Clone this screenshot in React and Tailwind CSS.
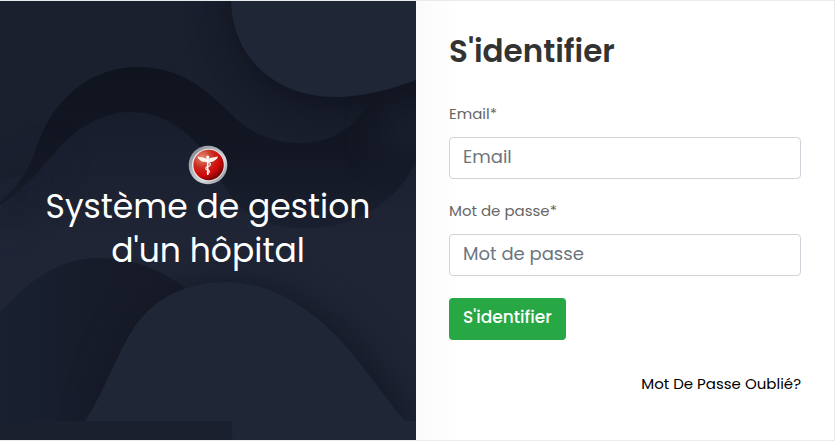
function Waves() {
  return (
    <svg
      className="col-start-1 row-start-1 h-full w-full"
      viewBox="0 0 416 439"
      preserveAspectRatio="none"
      aria-hidden="true"
    >
      <defs>
        <filter
          id="soft"
          filterUnits="userSpaceOnUse"
          x="-120"
          y="-120"
          width="680"
          height="680"
          colorInterpolationFilters="sRGB"
        >
          <feGaussianBlur stdDeviation="20" />
        </filter>
        <linearGradient id="band" x1="0" y1="66" x2="0" y2="240" gradientUnits="userSpaceOnUse">
          <stop offset="0" stopColor="#10141f" />
          <stop offset="0.5" stopColor="#131723" />
          <stop offset="1" stopColor="#1b2131" />
        </linearGradient>
        <linearGradient id="inner" x1="0" y1="110" x2="0" y2="240" gradientUnits="userSpaceOnUse">
          <stop offset="0" stopColor="#181d2c" />
          <stop offset="0.5" stopColor="#1b2131" />
          <stop offset="1" stopColor="#1f2535" />
        </linearGradient>
        <linearGradient id="low" x1="0" y1="0" x2="170" y2="0" gradientUnits="userSpaceOnUse">
          <stop offset="0" stopColor="#192130" />
          <stop offset="0.5" stopColor="#171c2a" />
          <stop offset="1" stopColor="#171a27" />
        </linearGradient>
        <clipPath id="upper">
          <path d="M0 0H416V76L372 95C360 122 335 142 300 142C270 142 248 130 230 112C206 88 180 66 138 66C90 66 52 98 36 148C28 170 18 186 0 201Z" />
        </clipPath>
        <clipPath id="frame">
          <rect width="416" height="420" />
        </clipPath>
      </defs>
      <rect width="416" height="439" fill="#1f2535" />
      <path d="M0 0H416V201H0Z" fill="#1a202e" />
      <path d="M0 181L36 169V201H0Z" fill="#1f2535" opacity="0.7" />
      <g clipPath="url(#upper)">
        <path d="M225 -20C225 70 265 112 340 112H440V-20Z" fill="#10131e" opacity="0.9" filter="url(#soft)" />
      </g>
      <path
        d="M0 201C18 186 28 170 36 148C52 98 90 66 138 66C180 66 206 88 230 112C248 130 270 142 300 142C335 142 360 122 372 95L416 70V270H0Z"
        fill="url(#band)"
      />
      <ellipse cx="412" cy="130" rx="30" ry="25" fill="#1f2535" opacity="0.8" filter="url(#soft)" />
      <path
        d="M0 204C25 190 42 165 58 148C80 124 105 111 130 111C160 111 183 126 200 146C220 170 223 190 242 207C262 224 285 228 312 227C362 226 402 194 416 160V439H0Z"
        fill="url(#inner)"
      />
      <g clipPath="url(#frame)">
        <path d="M0 204C25 190 42 165 58 148C52 170 30 195 0 225Z" fill="#121622" opacity="0.9" filter="url(#soft)" />
        <path d="M0 312C28 279 60 257 98 257C145 257 174 277 196 296V420H0Z" fill="url(#low)" />
        <path
          d="M95 440C110 390 120 355 140 325C165 290 195 283 232 283C280 283 325 310 355 345C385 375 405 410 425 440Z"
          fill="#131723"
          opacity="0.95"
          filter="url(#soft)"
        />
        <path
          d="M85 420C105 390 115 355 135 325C160 290 195 281 230 281C280 283 320 315 350 350C375 380 395 410 406 420Z"
          fill="#1f2635"
        />
      </g>
      <path d="M231 0C233 60 278 96 335 96C365 96 395 87 416 79V0Z" fill="#1f2635" />
      <rect y="420" width="232" height="19" fill="#1a202e" />
      <path d="M232 420H416V439H234Z" fill="#1f2635" />
    </svg>
  );
}

function Emblem() {
  return (
    <svg className="h-10 w-10" viewBox="0 0 40 40" role="img" aria-label="Caducée">
      <defs>
        <linearGradient id="ring" x1="0" y1="0" x2="1" y2="1">
          <stop offset="0" stopColor="#74787f" />
          <stop offset="0.4" stopColor="#b4b9bf" />
          <stop offset="0.65" stopColor="#d5d9dd" />
          <stop offset="1" stopColor="#777c84" />
        </linearGradient>
        <radialGradient id="ball" cx="0.3" cy="0.25" r="0.85">
          <stop offset="0" stopColor="#e78a74" />
          <stop offset="0.4" stopColor="#c92d20" />
          <stop offset="0.7" stopColor="#cf0808" />
          <stop offset="1" stopColor="#5a0505" />
        </radialGradient>
      </defs>
      <circle cx="20" cy="20" r="19.3" fill="url(#ring)" />
      <circle cx="20.3" cy="20" r="16.3" fill="#e4e6e8" />
      <circle cx="20.6" cy="20" r="15.2" fill="url(#ball)" />
      <path
        d="M19.5 14C16 12 13 12.500 9.500 11.500C10 14 11.500 14.500 12.500 15.500C14 17.500 17 16.500 19.500 17.500C22 16.500 25 17.500 26.500 15.500C28 14.500 29.500 14 30 11.500C26 12.500 23 12 19.500 14Z"
        fill="#fff4ec"
      />
      <circle cx="19.700" cy="12" r="1.600" fill="#fff" />
      <path d="M19.700 13V30" stroke="#fff" strokeWidth="1.600" />
      <path
        d="M20 17.500C23.500 18 23 21 20 21.500C17 22 17 24.500 19.500 25C22.500 25.500 21.500 28 19.500 28.500"
        fill="none"
        stroke="#fff"
        strokeWidth="1.100"
      />
    </svg>
  );
}

function Field({ id, label, type, placeholder }) {
  return (
    <div className="mb-5">
      <label htmlFor={id} className="mb-[11px] block text-[15px] leading-6 text-[#666]">
        {label}
      </label>
      <input
        id={id}
        type={type}
        placeholder={placeholder}
        className="block h-[42px] w-full rounded border border-[#ced4da] bg-white px-[13px] pb-[3px] text-[18px] text-[#495057] placeholder:text-[#6c757d]"
      />
    </div>
  );
}

export default function App() {
  return (
    <main className="grid min-h-screen grid-cols-[calc(50%-1px)_1fr] border-y border-r border-[#e9eaec] bg-white font-['Poppins',Inter,sans-serif]">
      <section className="grid overflow-hidden bg-[#1f2535]">
        <Waves />
        <div className="z-10 col-start-1 row-start-1 flex flex-col items-center justify-center px-8 pb-6 text-center text-white">
          <Emblem />
          <h1 className="text-[33px] leading-[44px] font-normal">
            Système de gestion d'un hôpital
          </h1>
        </div>
      </section>
      <section className="bg-linear-to-r from-[#fafafa] to-white to-10% px-[33px] pt-[30px] pb-10">
        <h2 className="mb-[31px] text-[31px] leading-10 font-semibold text-[#333]">S'identifier</h2>
        <form onSubmit={(event) => event.preventDefault()}>
          <Field id="email" label="Email*" type="email" placeholder="Email" />
          <Field id="password" label="Mot de passe*" type="password" placeholder="Mot de passe" />
          <button
            type="submit"
            className="mt-[2px] h-[42px] rounded bg-[#28a745] px-[14px] pb-[2px] text-[17px] font-medium text-white"
          >
            S'identifier
          </button>
        </form>
        <div className="mt-8 text-right">
          <a href="#oubli" className="text-[15px] leading-6 text-black">
            Mot De Passe Oublié?
          </a>
        </div>
      </section>
    </main>
  );
}
